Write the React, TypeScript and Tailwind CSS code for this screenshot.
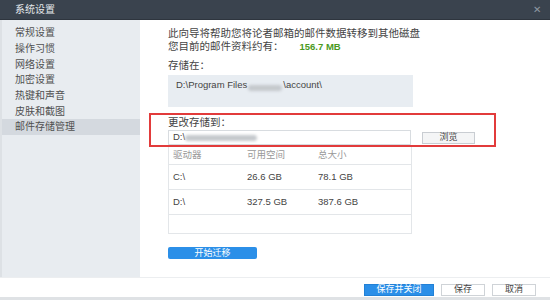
import React from "react";

const font = { fontFamily: '"Liberation Sans", "Noto Sans CJK SC", sans-serif' };

const navItems = ["常规设置", "操作习惯", "网络设置", "加密设置", "热键和声音", "皮肤和截图", "邮件存储管理"];

function Blur({ w }: { w: number }) {
  // the screenshot has this part of the path smudged out
  return (
    <span
      className="inline-block h-[6px] rounded-full bg-[#c4c8cc] blur-[1.5px] align-middle"
      style={{ width: w }}
    />
  );
}

export default function App() {
  return (
    <div className="w-[550px] h-[300px] flex flex-col bg-white overflow-hidden text-[#444]" style={font}>
      {/* title bar */}
      <div className="h-[20px] bg-[#3a434e] flex items-center justify-between pl-[15px] pr-[9px] border-b border-[#2e353e]">
        <span className="text-[10px] text-[#e4e7ea] leading-none">系统设置</span>
        <span className="text-[10px] text-[#8e97a1] leading-none">✕</span>
      </div>

      <div className="flex h-[257px]">
        {/* sidebar */}
        <aside className="w-[140px] bg-[#e8ecf0] pt-[5px] border-l-2 border-[#dde1e5]">
          {navItems.map((n, i) => (
            <div
              key={n}
              className={`h-[15.7px] flex items-center pl-[13px] text-[10px] text-[#505050] ${
                i === navItems.length - 1 ? "bg-[#d4d9df]" : ""
              }`}
            >
              {n}
            </div>
          ))}
        </aside>

        {/* main panel */}
        <main className="flex-1 pl-[28px] pt-[7px] text-[10.5px]">
          <p className="leading-[13px]">此向导将帮助您将论者邮箱的邮件数据转移到其他磁盘</p>
          <p className="leading-[13px] flex">
            <span>您目前的邮件资料约有：</span>
            <span className="ml-[16px] font-bold text-[#4a9a22] text-[9.5px]">156.7 MB</span>
          </p>
          <p className="leading-[13px] mt-[6px]">存储在：</p>
          <div className="mt-[3px] w-[245px] h-[32px] bg-[#e8edf2] pl-[8px] pt-[4px] text-[9.5px] leading-[12px] flex items-start">
            <span>D:\Program Files</span>
            <span className="mt-[3px] mx-[1px]"><Blur w={34} /></span>
            <span>\account\</span>
          </div>

          {/* highlighted target */}
          <div className="mt-[6px] ml-[-19px] w-[347px] h-[34px] border-2 border-[#e23b3b] pl-[17px] pt-[1px]">
            <p className="leading-[13px]">更改存储到：</p>
            <div className="flex items-center mt-[1px]">
              <div className="w-[243px] h-[15px] border border-[#d8dce0] bg-white flex items-center pl-[4px] text-[9.5px]">
                <span>D:\</span>
                <Blur w={72} />
              </div>
              <button className="ml-[11px] w-[53px] h-[12px] border border-[#c9cdd2] bg-[#f4f5f6] text-[9px] leading-none">
                浏览
              </button>
            </div>
          </div>

          {/* drive table */}
          <div className="w-[244px] border-x border-b border-[#e3e6e9] text-[9.5px]">
            <div className="h-[18px] flex items-center border-b border-[#e3e6e9] text-[#999]">
              <span className="w-[78px] pl-[4px]">驱动器</span>
              <span className="w-[71px]">可用空间</span>
              <span>总大小</span>
            </div>
            {[
              ["C:\\", "26.6 GB", "78.1 GB"],
              ["D:\\", "327.5 GB", "387.6 GB"],
            ].map((r) => (
              <div key={r[0]} className="h-[25px] flex items-center border-b border-[#e3e6e9]">
                <span className="w-[78px] pl-[4px]">{r[0]}</span>
                <span className="w-[71px]">{r[1]}</span>
                <span>{r[2]}</span>
              </div>
            ))}
            <div className="h-[18px]" />
          </div>

          <button className="mt-[13px] w-[89px] h-[12px] rounded-[2px] bg-[#2b8fe8] text-white text-[9px] leading-none">
            开始迁移
          </button>
        </main>
      </div>

      {/* footer */}
      <div className="h-[20px] border-t border-[#eceef0] flex items-center justify-end gap-[7px] pr-[14px] pt-[4px]">
        <button className="w-[70px] h-[12px] bg-[#2b8fe8] border border-[#2281d6] text-white text-[9px] leading-none">
          保存并关闭
        </button>
        <button className="w-[44px] h-[12px] bg-white border border-[#cfd3d7] text-[9px] leading-none">保存</button>
        <button className="w-[44px] h-[12px] bg-white border border-[#cfd3d7] text-[9px] leading-none">取消</button>
      </div>
      <div className="h-[3px] bg-[#dfe2e5]" />
    </div>
  );
}
